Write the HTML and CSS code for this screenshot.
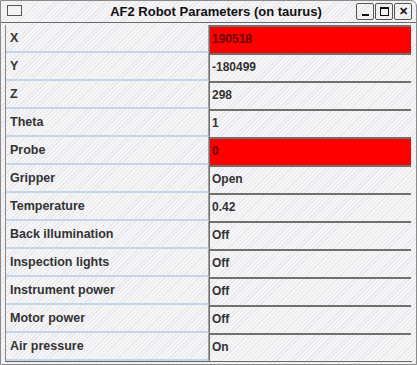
FILE: index.html
```html
<!DOCTYPE html>
<html lang=en><head>
<meta charset=UTF-8>
<title>AF2 Robot Parameters (on taurus)</title><link rel="stylesheet" href="styles.css"></head><body>
<div class=window>
<div class=titlebar>
<span class=menu-box></span>
<span class=title>AF2 Robot Parameters (on taurus)</span>
<div class=buttons>
<span class=btn><i class=min></i></span>
<span class=btn><i class=max></i></span>
<span class="btn x">&#x2715;</span>
</div></div>
<div class=table>
<div class=label>X</div><div class="value alarm">190518</div>
<div class=label>Y</div><div class=value>-180499</div>
<div class=label>Z</div><div class=value>298</div>
<div class=label>Theta</div><div class=value>1</div>
<div class=label>Probe</div><div class="value alarm">0</div>
<div class=label>Gripper</div><div class=value>Open</div>
<div class=label>Temperature</div><div class=value>0.42</div>
<div class=label>Back illumination</div><div class=value>Off</div>
<div class=label>Inspection lights</div><div class=value>Off</div>
<div class=label>Instrument power</div><div class=value>Off</div>
<div class=label>Motor power</div><div class=value>Off</div>
<div class=label>Air pressure</div><div class=value>On</div>
</div></div>
</body></html>
```
FILE: styles.css
```css
body{margin:0;background:#fff;font-family:"Liberation Sans",Arial,sans-serif}
.window{width:417px;height:365px;box-sizing:border-box;border:1px solid #8a8a8a;border-radius:0 6px 0 0;
background:repeating-linear-gradient(135deg,#f6f6f6 0 2px,#e6e6ec 2px 3px);display:flex;flex-direction:column}
.titlebar{height:21px;display:flex;align-items:center;padding:0 4px 0 6px;border-bottom:1px solid #6a6a6a}
.menu-box{width:13px;height:9px;border:1px solid #555;background:#f4f4f4;margin-top:-2px}
.title{flex:1;text-align:center;font-weight:700;font-size:13px;color:#111;padding-left:54px}
.buttons{display:flex;gap:1px}
.btn{width:18px;height:17px;border:1px solid #555;border-radius:2px;display:flex;align-items:center;justify-content:center;font-size:11px;font-weight:700;color:#111;box-sizing:border-box}
.min{display:block;width:7px;height:2px;background:#111;margin-top:7px}
.max{display:block;width:7px;height:6px;border:1px solid #111;border-top-width:2px}
.table{margin:2px 4px 0 4px;display:grid;grid-template-columns:203px 1fr;grid-auto-rows:28px;border-left:1px solid #8a8a8a;border-bottom:1px solid #6a6a6a}
.label,.value{font-weight:700;color:#333;display:flex;align-items:center}
.label{font-size:12.5px;padding-left:4px;border-bottom:2px solid #c4d4ea;border-right:1px solid #a0a0a0}
.value{font-size:12px;padding:0 0 2px 2px;border-top:2px solid #707070;border-left:1px solid #707070;margin-right:1px}
.alarm{background:#ff0000;color:#660000}
```
